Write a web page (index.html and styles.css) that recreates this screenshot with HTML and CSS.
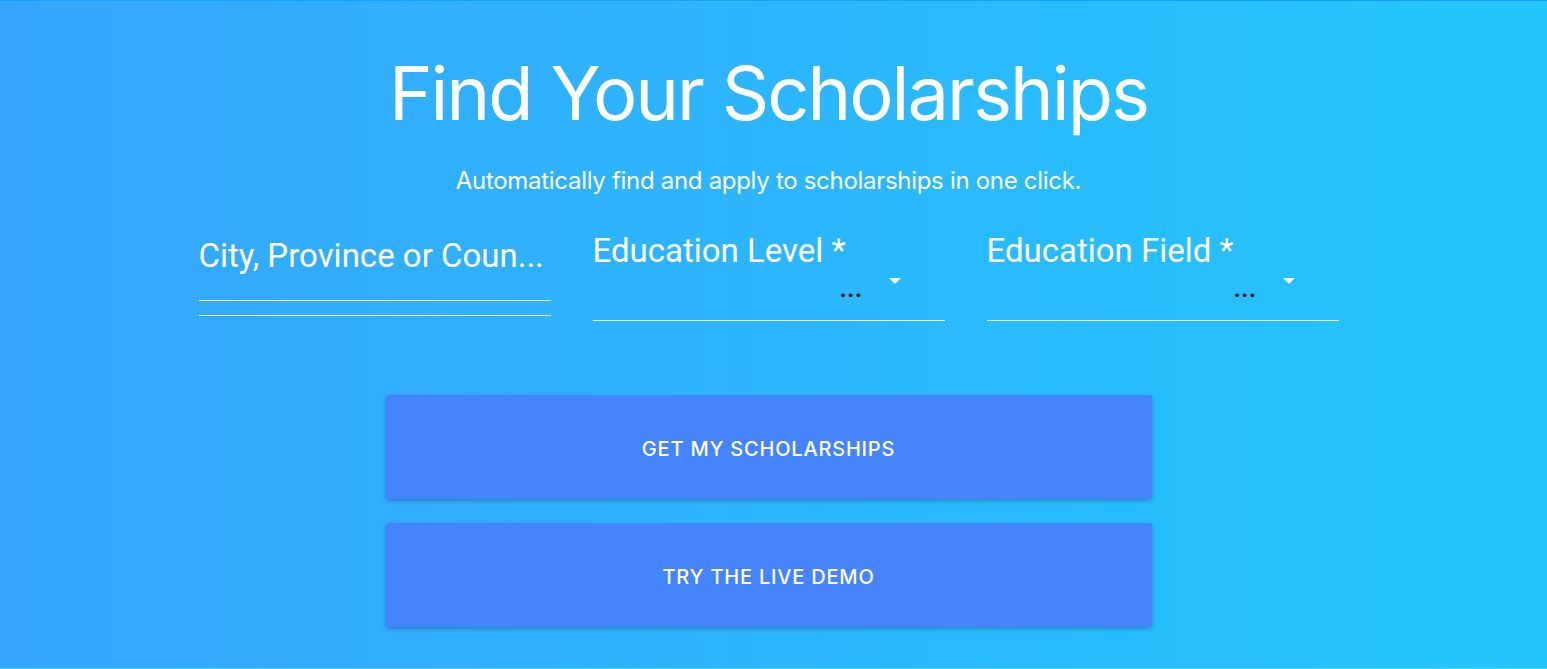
FILE: index.html
```html
<!DOCTYPE html>
<html>
<head>
<meta charset="utf-8">
<link rel="stylesheet" href="styles.css">
</head>
<body>
<section class="hero">
  <h1 class="title">Find Your Scholarships</h1>
  <p class="subtitle">Automatically find and apply to scholarships in one click.</p>
  <div class="fields">
    <div class="field field-text">
      <div class="label">City, Province or Coun...</div>
      <div class="line"></div>
      <div class="line second"></div>
    </div>
    <div class="field field-select">
      <div class="label">Education Level *</div>
      <div class="select-row">
        <span class="dots">...</span>
        <span class="arrow"></span>
      </div>
      <div class="line"></div>
    </div>
    <div class="field field-select">
      <div class="label">Education Field *</div>
      <div class="select-row">
        <span class="dots">...</span>
        <span class="arrow"></span>
      </div>
      <div class="line"></div>
    </div>
  </div>
  <div class="buttons">
    <button class="btn">GET MY SCHOLARSHIPS</button>
    <button class="btn">TRY THE LIVE DEMO</button>
  </div>
</section>
</body>
</html>
```

FILE: styles.css
```css
html, body {
  margin: 0;
  padding: 0;
  height: 100%;
}
body {
  font-family: Inter, "Noto Sans", sans-serif;
  overflow: hidden;
}
.hero {
  box-sizing: border-box;
  height: 669px;
  padding-right: 10px;
  border-top: 1px solid #15a0ff;
  border-bottom: 1px solid #4fcfff;
  background: linear-gradient(90deg, #36a6fd 0%, #2cb6fd 50%, #23c6fc 100%);
  display: flex;
  flex-direction: column;
  align-items: center;
  color: #fff;
}
.title {
  margin: 44px 0 0;
  font-weight: 400;
  font-size: 74px;
  line-height: 96px;
  letter-spacing: -2px;
}
.subtitle {
  margin: 26px 0 0;
  font-size: 24px;
  line-height: 28px;
  letter-spacing: -0.3px;
}
.fields {
  display: flex;
  gap: 42px;
  margin-top: 28px;
  font-family: Roboto, sans-serif;
}
.field {
  width: 352px;
  display: flex;
  flex-direction: column;
}
.label {
  font-size: 33px;
  line-height: 36px;
  white-space: nowrap;
}
.field-text .label {
  padding-top: 15px;
}
.field-select .label {
  padding-top: 10px;
}
.line {
  height: 1px;
  background: #fff;
}
.field-text .line {
  margin-top: 26px;
}
.field-text .line.second {
  margin-top: 14px;
}
.select-row {
  height: 51px;
  display: flex;
  justify-content: flex-end;
  align-items: flex-start;
  padding-right: 44px;
  gap: 26px;
}
.dots {
  color: #111;
  font-size: 24px;
  line-height: 24px;
  margin-top: 8px;
  font-weight: 700;
  letter-spacing: 0.6px;
}
.arrow {
  width: 0;
  height: 0;
  border-left: 6px solid transparent;
  border-right: 6px solid transparent;
  border-top: 6px solid #fff;
  margin-top: 9px;
}
.buttons {
  display: flex;
  flex-direction: column;
  gap: 24px;
  margin-top: 74px;
}
.btn {
  width: 766px;
  height: 104px;
  border: none;
  border-radius: 2px;
  background: #4584fc;
  color: #fff;
  font-family: Inter, sans-serif;
  font-size: 20px;
  letter-spacing: 0.8px;
  font-weight: 500;
  box-shadow: 0 2px 4px rgba(0, 0, 0, 0.25);
  padding: 3px 0 0;
}
```
